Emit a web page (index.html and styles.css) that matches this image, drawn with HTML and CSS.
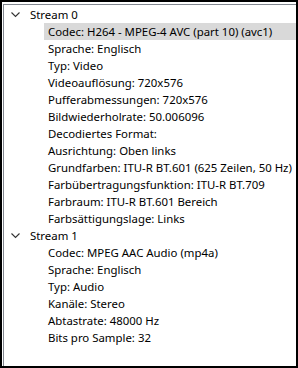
FILE: index.html
```html
<!DOCTYPE html>
<html lang="de">
  <head>
    <meta charset="UTF-8" />
    <title>Streams</title>
    <link rel="stylesheet" href="styles.css">
  </head>
  <body>
    <div id="frame">
      <div id="tree">
        <div class="node">
          <svg class="chevron" width="9" height="6" viewBox="0 0 9 6"><polyline points="0.5,0.5 4.5,4.5 8.5,0.5" fill="none" stroke="#333" stroke-width="1.1"/></svg>
          <span>Stream 0</span>
        </div>
        <div class="item selected">Codec: H264 - MPEG-4 AVC (part 10) (avc1)</div>
        <div class="item">Sprache: Englisch</div>
        <div class="item">Typ: Video</div>
        <div class="item">Videoauflösung: 720x576</div>
        <div class="item">Pufferabmessungen: 720x576</div>
        <div class="item">Bildwiederholrate: 50.006096</div>
        <div class="item">Decodiertes Format:</div>
        <div class="item">Ausrichtung: Oben links</div>
        <div class="item">Grundfarben: ITU-R BT.601 (625 Zeilen, 50 Hz)</div>
        <div class="item">Farbübertragungsfunktion: ITU-R BT.709</div>
        <div class="item">Farbraum: ITU-R BT.601 Bereich</div>
        <div class="item">Farbsättigungslage: Links</div>
        <div class="node">
          <svg class="chevron" width="9" height="6" viewBox="0 0 9 6"><polyline points="0.5,0.5 4.5,4.5 8.5,0.5" fill="none" stroke="#333" stroke-width="1.1"/></svg>
          <span>Stream 1</span>
        </div>
        <div class="item">Codec: MPEG AAC Audio (mp4a)</div>
        <div class="item">Sprache: Englisch</div>
        <div class="item">Typ: Audio</div>
        <div class="item">Kanäle: Stereo</div>
        <div class="item">Abtastrate: 48000 Hz</div>
        <div class="item">Bits pro Sample: 32</div>
      </div>
    </div>
  </body>
</html>
```

FILE: styles.css
```css
* {
  margin: 0;
  padding: 0;
  box-sizing: border-box;
}

body {
  font-family: "Noto Sans", "Open Sans", sans-serif;
  font-size: 11.4px;
  color: #000;
  background-color: #fff;
}

#frame {
  width: 298px;
  height: 368px;
  border: 2px solid #000;
  padding: 2px 0 0 1px;
  background-color: #fff;
}

#tree {
  height: 100%;
  border-left: 1px solid #828790;
  border-top: 1px solid #828790;
  padding-top: 1px;
}

.node {
  display: flex;
  align-items: center;
  height: 17px;
  padding-left: 7px;
  white-space: nowrap;
}

.chevron {
  margin-right: 10px;
}

.item {
  height: 17px;
  line-height: 17px;
  margin-left: 40px;
  padding-left: 4px;
  white-space: nowrap;
}

.selected {
  background-color: #d9d9d9;
}
```
